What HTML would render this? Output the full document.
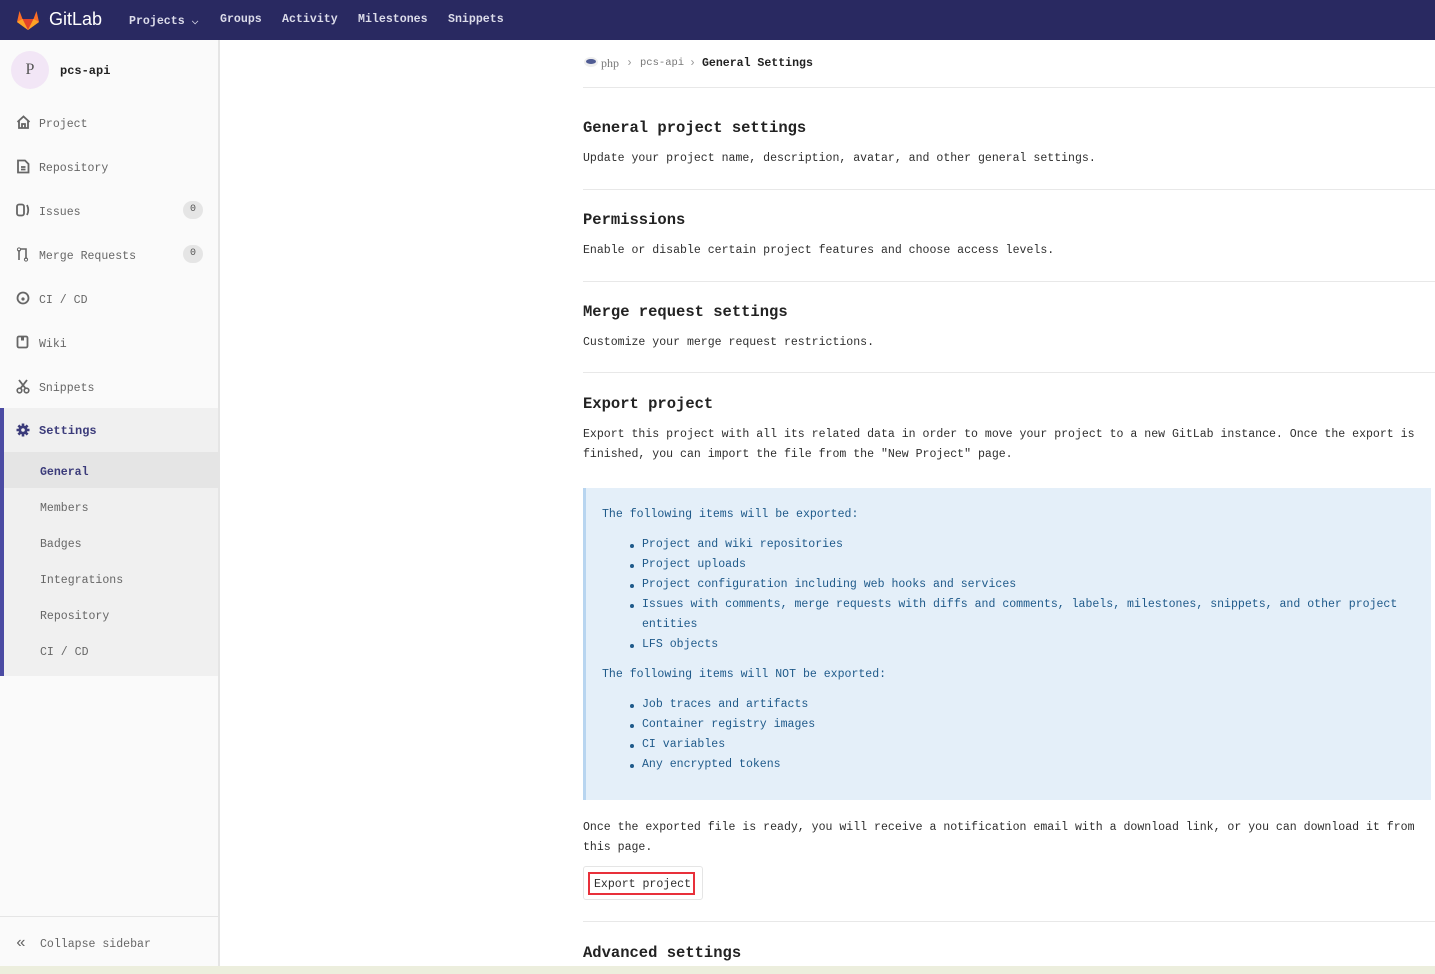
<!DOCTYPE html>
<html><head><meta charset="utf-8"><style>
*{box-sizing:border-box;margin:0;padding:0}
body{width:1435px;height:974px;overflow:hidden;background:#fff;font-family:"Liberation Mono","Noto Sans CJK SC",monospace;font-size:11.55px;color:#2e2e2e;position:relative}
.top{position:absolute;left:0;top:0;width:1435px;height:40px;background:#292961;color:#fff}
.top .logo{position:absolute;left:16px;top:9px}
.top .brand{position:absolute;left:49px;top:9px;font-family:"Liberation Sans",sans-serif;font-size:18px;color:#fff}
.top .nav{position:absolute;top:13px;font-weight:bold;font-size:11.6px;color:#dcdcea}
.side{position:absolute;left:0;top:40px;width:220px;height:934px;background:#fafafa;border-right:2px solid #e5e5e5}
.av{position:absolute;left:11px;top:11px;width:38px;height:38px;border-radius:50%;background:#f2e6f6;color:#555;font-family:"Liberation Serif",serif;font-size:16px;text-align:center;line-height:38px}
.pname{position:absolute;left:60px;top:24px;font-weight:bold;font-size:12px;color:#222}
.it{position:absolute;left:0;width:218px;height:44px;color:#666}
.it span.t{position:absolute;left:39px;top:18px}
.it svg{position:absolute;left:16px;top:15px}
.badge{position:absolute;left:183px;top:13px;width:20px;height:18px;border-radius:9px;background:#e5e5e5;font-size:10px;text-align:center;line-height:18px;color:#555}
.set{position:absolute;left:0;top:368px;width:218px;height:268px;background:#f0f0f0;border-left:4px solid #4b4ba3}
.sub{position:absolute;left:36px;color:#666}
.hr{position:absolute;left:583px;width:852px;height:1px;background:#e8e8e8}
h2{position:absolute;left:583px;font-size:15.5px;font-weight:bold;color:#222}
p.d{position:absolute;left:583px;color:#2e2e2e;line-height:20px;width:850px}
.info{position:absolute;left:583px;top:488px;width:848px;height:312px;background:#e4eff9;border-left:3px solid #b8d5f0;color:#1f5a8a;line-height:20px}
.info ul{list-style:none;margin-left:38px}
.info li{position:relative;padding-left:18px}
.info li:before{content:"";position:absolute;left:6px;top:9px;width:4px;height:4px;border-radius:50%;background:#1f5a8a}
</style></head><body>
<div class="top">
<svg class="logo" width="24" height="22" viewBox="0 0 24 22"><path d="M12 21 L1 13 L3.5 2 L6.5 10 L17.5 10 L20.5 2 L23 13Z" fill="#fc6d26"/><path d="M12 21 L6.5 10 L17.5 10Z" fill="#e24329"/><path d="M1 13 L6.5 10 L12 21Z" fill="#fca326"/><path d="M23 13 L17.5 10 L12 21Z" fill="#fca326"/></svg>
<div class="brand">GitLab</div>
<div class="nav" style="left:129px">Projects ⌵</div>
<div class="nav" style="left:220px">Groups</div>
<div class="nav" style="left:282px">Activity</div>
<div class="nav" style="left:358px">Milestones</div>
<div class="nav" style="left:448px">Snippets</div>
</div>
<div class="side">
<div class="av">P</div><div class="pname">pcs-api</div>
<div class="it" style="top:60px"><svg width="15" height="14" viewBox="0 0 15 14"><path d="M1.5 7 L7.5 1.5 L13.5 7 M3 6 V13 H12 V6 M6 13 V9 H9 V13" fill="none" stroke="#666" stroke-width="1.8"/></svg><span class="t">Project</span></div>
<div class="it" style="top:104px"><svg width="14" height="15" viewBox="0 0 14 15"><path d="M2 1.5 H9 L12.5 5 V13.5 H2Z M5 8 H9.5 M5 10.5 H9.5" fill="none" stroke="#666" stroke-width="1.8"/></svg><span class="t">Repository</span></div>
<div class="it" style="top:148px"><svg width="15" height="14" viewBox="0 0 15 14"><rect x="1" y="1.5" width="7" height="11" rx="2" fill="none" stroke="#666" stroke-width="1.8"/><path d="M11 2 Q13.5 7 11 12" fill="none" stroke="#666" stroke-width="1.8"/></svg><span class="t">Issues</span><div class="badge">0</div></div>
<div class="it" style="top:192px"><svg width="14" height="15" viewBox="0 0 14 15"><path d="M3 3 V13 M4 2 H10 V12" fill="none" stroke="#666" stroke-width="1.6"/><circle cx="3" cy="2.5" r="1.6" fill="none" stroke="#666"/><circle cx="10" cy="12.5" r="1.6" fill="none" stroke="#666"/></svg><span class="t">Merge Requests</span><div class="badge">0</div></div>
<div class="it" style="top:236px"><svg width="14" height="14" viewBox="0 0 14 14"><circle cx="7" cy="7" r="5.5" fill="none" stroke="#666" stroke-width="1.8"/><circle cx="7" cy="8" r="1.6" fill="#666"/></svg><span class="t">CI / CD</span></div>
<div class="it" style="top:280px"><svg width="13" height="14" viewBox="0 0 13 14"><rect x="1.5" y="1.5" width="10" height="11" rx="1.5" fill="none" stroke="#666" stroke-width="1.8"/><rect x="5" y="1.5" width="3" height="4" fill="#666"/></svg><span class="t">Wiki</span></div>
<div class="it" style="top:324px"><svg width="14" height="15" viewBox="0 0 14 15"><path d="M3 1 L10 10 M11 1 L4 10" stroke="#666" stroke-width="1.8"/><circle cx="3.5" cy="11.5" r="2.3" fill="none" stroke="#666" stroke-width="1.6"/><circle cx="10.5" cy="11.5" r="2.3" fill="none" stroke="#666" stroke-width="1.6"/></svg><span class="t">Snippets</span></div>
<div class="set">
<svg style="position:absolute;left:12px;top:15px" width="14" height="14" viewBox="0 0 14 14"><circle cx="7" cy="7" r="4.5" fill="#3b3b7a"/><path d="M7 0.5 V13.5 M0.5 7 H13.5 M2.4 2.4 L11.6 11.6 M11.6 2.4 L2.4 11.6" stroke="#3b3b7a" stroke-width="2.6"/><circle cx="7" cy="7" r="1.8" fill="#f0f0f0"/></svg>
<div style="position:absolute;left:35px;top:16px;font-weight:bold;font-size:12px;color:#3b3b7a">Settings</div>
<div style="position:absolute;left:0;top:44px;width:214px;height:36px;background:#e5e5e5"></div>
<div class="sub" style="top:58px;font-weight:bold;color:#3b3b7a">General</div>
<div class="sub" style="top:94px">Members</div>
<div class="sub" style="top:130px">Badges</div>
<div class="sub" style="top:166px">Integrations</div>
<div class="sub" style="top:202px">Repository</div>
<div class="sub" style="top:238px">CI / CD</div>
</div>
<div style="position:absolute;left:0;top:876px;width:218px;height:1px;background:#e5e5e5"></div>
<div style="position:absolute;left:16px;top:894px;color:#666;font-size:16px">«</div>
<div style="position:absolute;left:40px;top:898px;color:#666">Collapse sidebar</div>
</div>
<div style="position:absolute;left:584px;top:57px;width:14px;height:10px;border-radius:50%;background:#eee"></div>
<div style="position:absolute;left:586px;top:59px;width:10px;height:5px;border-radius:50%;background:#4f5b93"></div>
<div style="position:absolute;left:601px;top:56px;color:#777;font-family:'Liberation Serif',serif;font-size:12px">php</div>
<div style="position:absolute;left:626px;top:57px;color:#999">›</div>
<div style="position:absolute;left:640px;top:57px;color:#777;font-size:10.5px">pcs-api</div>
<div style="position:absolute;left:689px;top:57px;color:#999">›</div>
<div style="position:absolute;left:702px;top:57px;font-weight:bold;color:#222">General Settings</div>
<div class="hr" style="top:87px"></div>
<h2 style="top:119px">General project settings</h2>
<p class="d" style="top:149px">Update your project name, description, avatar, and other general settings.</p>
<div class="hr" style="top:189px"></div>
<h2 style="top:211px">Permissions</h2>
<p class="d" style="top:241px">Enable or disable certain project features and choose access levels.</p>
<div class="hr" style="top:281px"></div>
<h2 style="top:303px">Merge request settings</h2>
<p class="d" style="top:333px">Customize your merge request restrictions.</p>
<div class="hr" style="top:372px"></div>
<h2 style="top:395px">Export project</h2>
<p class="d" style="top:425px">Export this project with all its related data in order to move your project to a new GitLab instance. Once the export is finished, you can import the file from the "New Project" page.</p>
<div class="info">
<div style="padding:17px 0 0 16px">The following items will be exported:</div>
<ul style="margin-top:10px"><li>Project and wiki repositories</li><li>Project uploads</li><li>Project configuration including web hooks and services</li><li>Issues with comments, merge requests with diffs and comments, labels, milestones, snippets, and other project entities</li><li>LFS objects</li></ul>
<div style="padding:10px 0 0 16px">The following items will NOT be exported:</div>
<ul style="margin-top:10px"><li>Job traces and artifacts</li><li>Container registry images</li><li>CI variables</li><li>Any encrypted tokens</li></ul>
</div>
<p class="d" style="top:818px">Once the exported file is ready, you will receive a notification email with a download link, or you can download it from this page.</p>
<div style="position:absolute;left:583px;top:866px;width:120px;height:34px;border:1px solid #e5e5e5;border-radius:3px"></div>
<div style="position:absolute;left:588px;top:872px;width:107px;height:23px;border:2px solid #e8303a;padding:4px 0 0 4px;color:#2e2e2e">Export project</div>
<div class="hr" style="top:921px"></div>
<h2 style="top:944px">Advanced settings</h2>
<div style="position:absolute;left:0;top:966px;width:1435px;height:8px;background:#eceedd"></div>
</body></html>
